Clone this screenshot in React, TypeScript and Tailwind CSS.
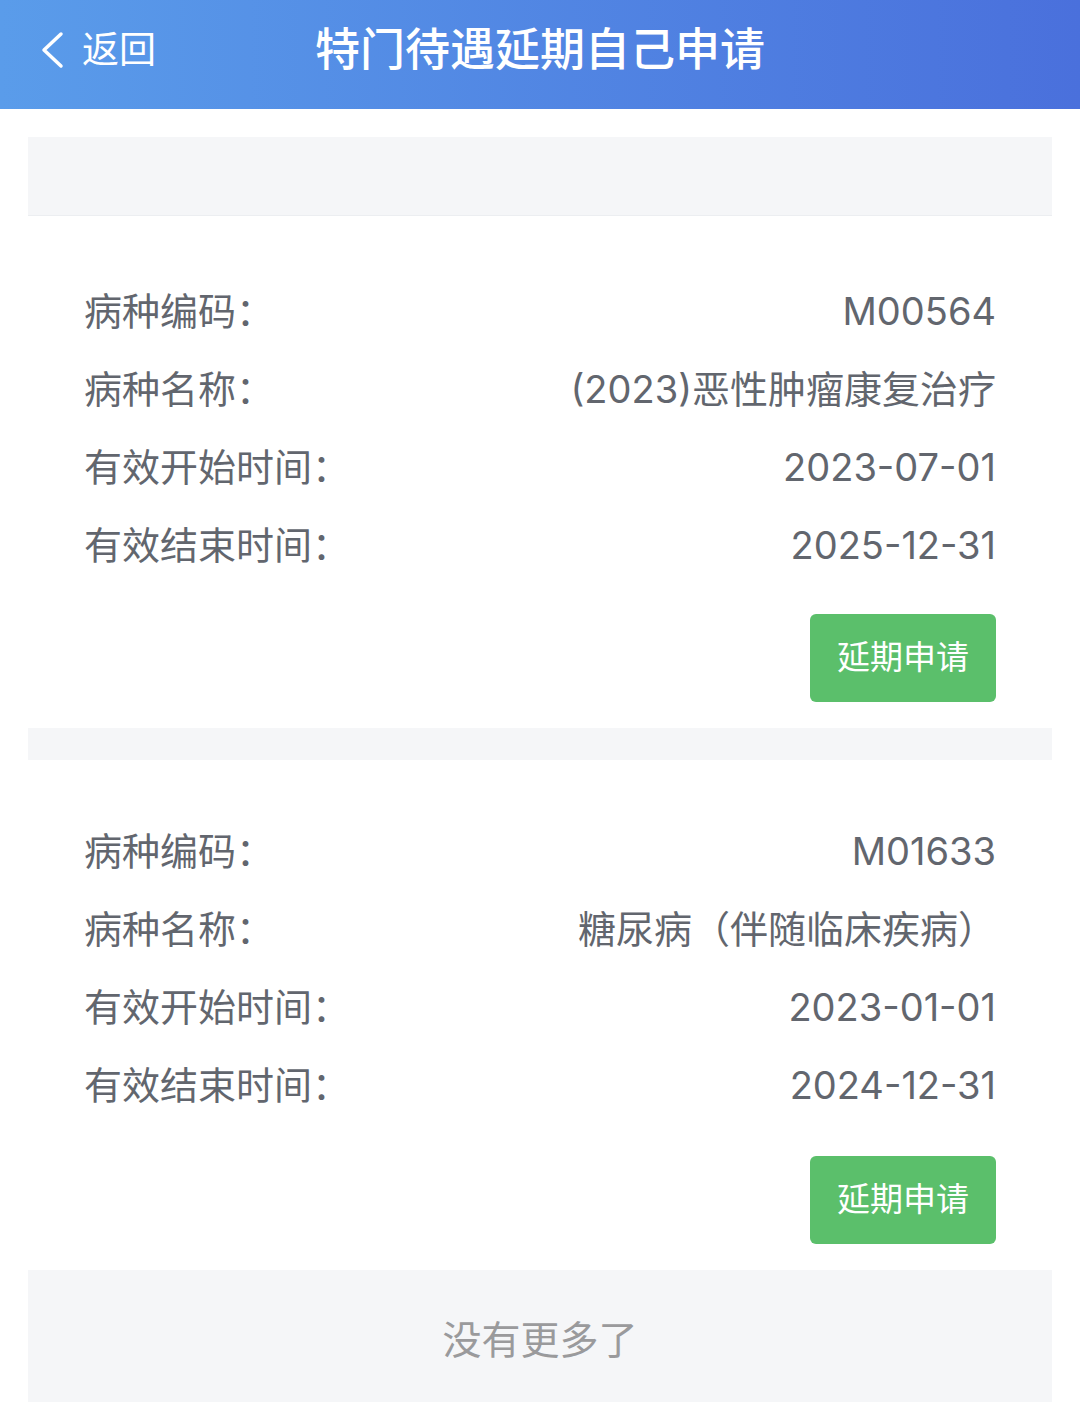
const records = [
  { code: 'M00564', name: '(2023)恶性肿瘤康复治疗', start: '2023-07-01', end: '2025-12-31' },
  { code: 'M01633', name: '糖尿病（伴随临床疾病）', start: '2023-01-01', end: '2024-12-31' },
];

const font = { fontFamily: 'Inter, "Noto Sans CJK SC", "Noto Sans", sans-serif' };

function Row({ label, value }: { label: string; value: string }) {
  return (
    <div className="flex h-[78px] items-center justify-between text-[38px] text-[#62666e] [text-spacing-trim:space-all]">
      <span>{label}</span>
      <span>{value}</span>
    </div>
  );
}

function RecordCard({ r, top, gap }: { r: (typeof records)[number]; top: string; gap: string }) {
  return (
    <div className={`bg-white px-[56px] pb-[26px] ${top}`}>
      <Row label="病种编码：" value={r.code} />
      <Row label="病种名称：" value={r.name} />
      <Row label="有效开始时间：" value={r.start} />
      <Row label="有效结束时间：" value={r.end} />
      <div className={`flex justify-end ${gap}`}>
        <button className="flex h-[88px] w-[186px] items-center justify-center rounded-[6px] bg-[#5bbf6b] text-[33px] text-white">
          延期申请
        </button>
      </div>
    </div>
  );
}

export default function App() {
  return (
    <div className="min-h-[1402px] w-[1080px] bg-white" style={font}>
      {/* 顶部导航 */}
      <div className="relative flex h-[109px] items-center bg-gradient-to-r from-[#5a9cea] to-[#4a70dc] pb-[10px] text-white">
        <div className="flex items-center gap-[18px] pl-[40px]">
          <svg width="24" height="38" viewBox="0 0 24 38" fill="none">
            <polyline points="21,3 4,19 21,35" stroke="white" strokeWidth="3.5" strokeLinecap="round" strokeLinejoin="round" />
          </svg>
          <span className="text-[37px]">返回</span>
        </div>
        <h1 className="absolute left-0 right-0 text-center text-[45px] font-medium">特门待遇延期自己申请</h1>
      </div>

      <div className="px-[28px] pt-[28px]">
        <div className="h-[79px] border-b border-[#eceef1] bg-[#f5f6f8]" />
        <RecordCard r={records[0]} top="pt-[56px]" gap="mt-[30px]" />
        <div className="h-[32px] bg-[#f5f6f8]" />
        <RecordCard r={records[1]} top="pt-[52px]" gap="mt-[32px]" />
        <div className="flex h-[132px] items-center justify-center bg-[#f5f6f8] pt-[8px] text-[39px] text-[#9a9a9c]">
          没有更多了
        </div>
      </div>
    </div>
  );
}
